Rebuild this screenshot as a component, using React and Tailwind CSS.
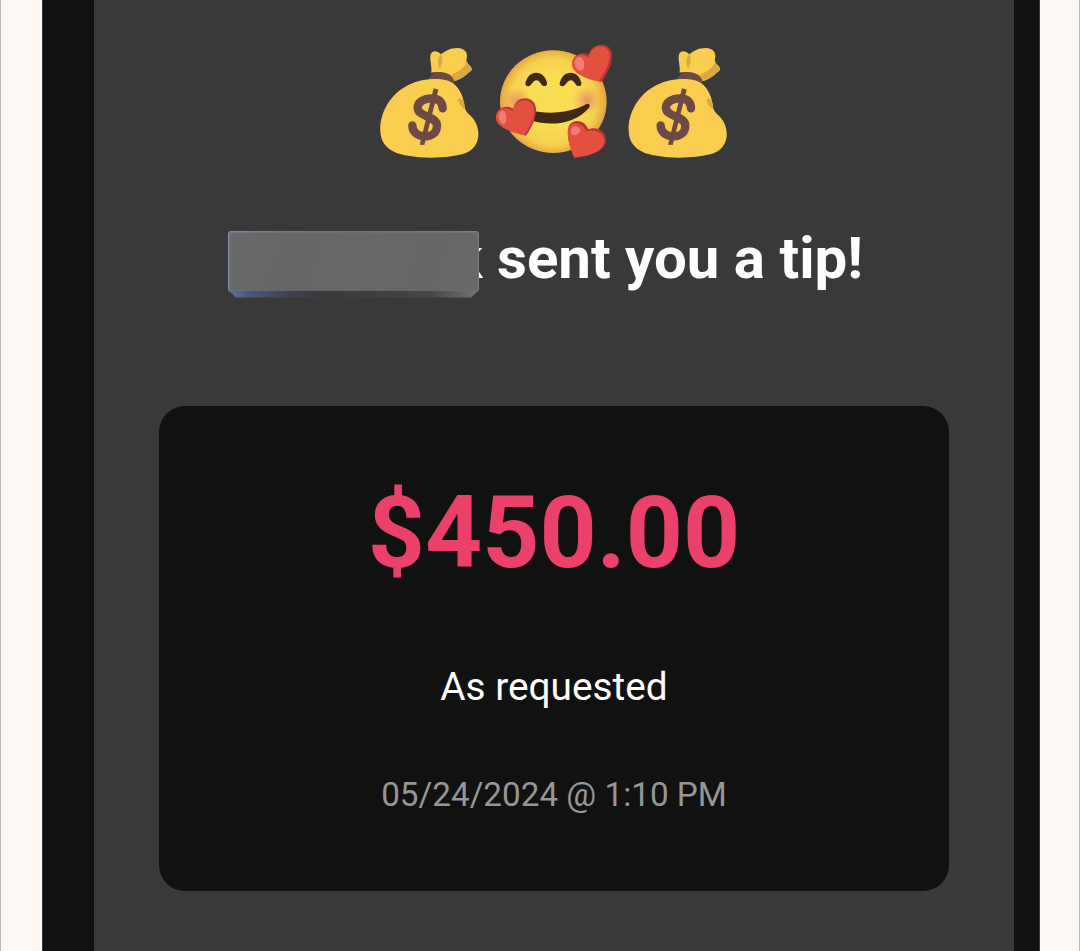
function MoneyBag({ viewBox }) {
  return (
    <svg className="h-[135px] w-[120px] shrink-0" viewBox={viewBox} aria-hidden="true">
      <path d="M184 113 C186 92 178 72 182 58 C187 46 201 45 213 58 C226 48 240 39 262 39 C285 39 296 54 289 76 C291 89 307 93 305 105 C293 116 274 135 252 138 C235 118 212 108 184 113Z" fill="#f9cd4e" />
      <path d="M213 58 C220 68 217 82 210 101 C202 91 201 70 213 58Z" fill="#d9a840" />
      <path d="M291 77 C288 92 272 108 246 118 L252 138 C274 134 291 118 305 105 C307 94 291 91 291 77Z" fill="#d9a840" />
      <path d="M176 133 C186 111 206 107 227 114 C244 119 254 126 252 151Z" fill="#6b4b44" />
      <path d="M177 133 C202 130 231 132 249 145 C270 160 281 187 284 217 C288 238 307 240 318 265 C335 306 321 341 286 355 C246 369 161 372 115 362 C62 355 32 330 31 287 C29 235 59 187 94 163 C119 145 148 135 177 133Z" fill="#f9cd4e" />
      <path d="M265 191 C278 188 285 201 284 222 C272 215 264 203 265 191Z" fill="#d9a840" />
      <path d="M218 220 C217 198 203 190 186 190 C160 190 143 202 143 218 C143 247 201 241 201 272 C201 293 185 304 166 304 C144 304 127 293 127 271" fill="none" stroke="#6b4b44" strokeWidth="25" strokeLinecap="round" />
      <path d="M191 160 L205 164 L163 330 L149 329Z" fill="#6b4b44" />
    </svg>
  );
}

function Heart({ body, face, shine }) {
  return (
    <g>
      <path d={body} fill="#bd3434" />
      <path d={face} fill="#e3503f" />
      <path d={shine} fill="#f17b75" />
    </g>
  );
}

const EYE = "M112 144 C118 123 129 113 145 113 C161 113 172 124 177 143 C179 153 167 157 161 149 C155 141 151 136 146 136 C140 136 134 142 128 150 C121 157 110 153 112 144Z";

function HeartsFace() {
  return (
    <svg className="mr-[2px] h-[135px] w-[128px] shrink-0" viewBox="6 0 384 405" aria-hidden="true">
      <defs>
        <radialGradient id="skin" cx="195" cy="200" r="160" gradientUnits="userSpaceOnUse">
          <stop offset="0.5" stopColor="#f9dd52" />
          <stop offset="0.8" stopColor="#f6d24f" />
          <stop offset="1" stopColor="#e5a340" />
        </radialGradient>
        <radialGradient id="blush">
          <stop offset="0" stopColor="#e68a64" stopOpacity="0.85" />
          <stop offset="1" stopColor="#ed9560" stopOpacity="0" />
        </radialGradient>
      </defs>
      <ellipse cx="196" cy="200" rx="160" ry="154" fill="url(#skin)" />
      <ellipse cx="87" cy="199" rx="46" ry="43" fill="url(#blush)" />
      <ellipse cx="298" cy="195" rx="46" ry="43" fill="url(#blush)" />
      <path d={EYE} fill="#402a16" />
      <path d={EYE} transform="translate(103 0)" fill="#402a16" />
      <path d="M125 226 C181 239 248 234 294 208 C302 203 309 210 303 218 C264 266 190 276 128 256Z" fill="#402a16" />
      <Heart
        body="M341 141 C307 133 263 119 254 95 C245 66 277 45 302 59 C308 35 331 25 351 31 C389 43 370 101 341 141Z"
        face="M331 140 C300 132 258 119 253 94 C247 66 280 48 301 68 C306 41 330 29 348 35 C383 53 357 105 331 140Z"
        shine="M270 67 C284 60 294 85 286 101 C278 115 259 99 259 83 C260 75 264 70 270 67Z"
      />
      <Heart
        body="M114 302 C71 291 31 280 25 253 C19 222 52 205 76 221 C81 195 105 184 126 193 C159 210 142 264 114 302Z"
        face="M108 300 C67 290 29 277 24 252 C20 224 52 209 74 229 C79 202 103 190 122 198 C153 218 136 265 108 300Z"
        shine="M38 228 C51 221 58 245 54 260 C47 276 33 261 32 245 C32 236 34 231 38 228Z"
      />
      <Heart
        body="M259 368 C245 340 233 291 243 272 C257 250 290 255 301 283 C326 273 351 288 354 311 C357 348 302 366 259 368Z"
        face="M259 368 C246 340 234 297 242 279 C253 256 283 263 294 289 C320 280 346 293 349 316 C350 351 299 363 259 368Z"
        shine="M253 278 C262 268 279 279 276 288 C273 296 258 307 251 298 C247 291 249 283 253 278Z"
      />
    </svg>
  );
}

function NameCover() {
  return (
    <svg className="absolute left-0 top-[6px] h-[67px] w-[251px]" viewBox="0 0 251 67" aria-hidden="true">
      <defs>
        <linearGradient id="plate" x1="0" y1="0" x2="1" y2="0.08">
          <stop offset="0" stopColor="#67696a" />
          <stop offset="0.3" stopColor="#656768" />
          <stop offset="0.6" stopColor="#68696a" />
          <stop offset="0.85" stopColor="#656768" />
          <stop offset="1" stopColor="#68696a" />
        </linearGradient>
        <linearGradient id="bevel">
          <stop offset="0" stopColor="#66739f" />
          <stop offset="0.08" stopColor="#4b5581" />
          <stop offset="0.24" stopColor="#404250" />
          <stop offset="0.4" stopColor="#393a3b" />
          <stop offset="0.8" stopColor="#464647" />
          <stop offset="1" stopColor="#737474" />
        </linearGradient>
        <linearGradient id="rim">
          <stop offset="0" stopColor="#7f89a8" />
          <stop offset="0.15" stopColor="#777c88" />
          <stop offset="0.5" stopColor="#717374" />
          <stop offset="1" stopColor="#7c7d7e" />
        </linearGradient>
      </defs>
      <path d="M0 2 L2 0 H249 L251 2 V59 L243 66.5 H8 L0 59Z" fill="url(#bevel)" />
      <path d="M0 2 L2 0 H249 L251 2 V59.5 H0Z" fill="url(#rim)" />
      <path d="M1.5 1.5 H250 V59.5 H1.5Z" fill="url(#plate)" />
    </svg>
  );
}

export default function App() {
  return (
    <div className="flex h-[951px] w-[1080px] overflow-hidden border-x border-[#bdb9b6] bg-[#fef8f4] pl-[41px] pr-[39px] font-['Roboto',sans-serif]">
      <div className="flex w-full border-l border-r border-l-[#383838] border-r-[#383838] bg-[#111111] pl-[51px] pr-[25px]">
        <main className="flex w-[920px] flex-col items-center bg-[#393939] pt-[35px]">
          <div className="flex w-[370px] translate-x-px">
            <MoneyBag viewBox="0 0 360 405" />
            <HeartsFace />
            <MoneyBag viewBox="5 0 360 405" />
          </div>
          <h1 className="relative mt-[55px] flex h-[67px] w-[652px] items-center justify-end whitespace-nowrap pr-[17px] text-[58.2px] font-bold leading-none text-white">
            <span>k sent you a tip!</span>
            <NameCover />
          </h1>
          <section className="mt-[114px] flex h-[484.5px] w-[790px] flex-col items-center rounded-[26px] bg-[#111111] pt-[67px] leading-none">
            <p className="h-[120px] text-[99.8px] font-bold leading-[120px] text-[#eb4069]">$450.00</p>
            <p className="mt-[70px] h-[48px] text-[38.8px] leading-[48px] text-white">As requested</p>
            <p className="mt-[64px] h-[40px] text-[33.25px] leading-[40px] text-[#969696]">05/24/2024 @ 1:10 PM</p>
          </section>
        </main>
      </div>
    </div>
  );
}
